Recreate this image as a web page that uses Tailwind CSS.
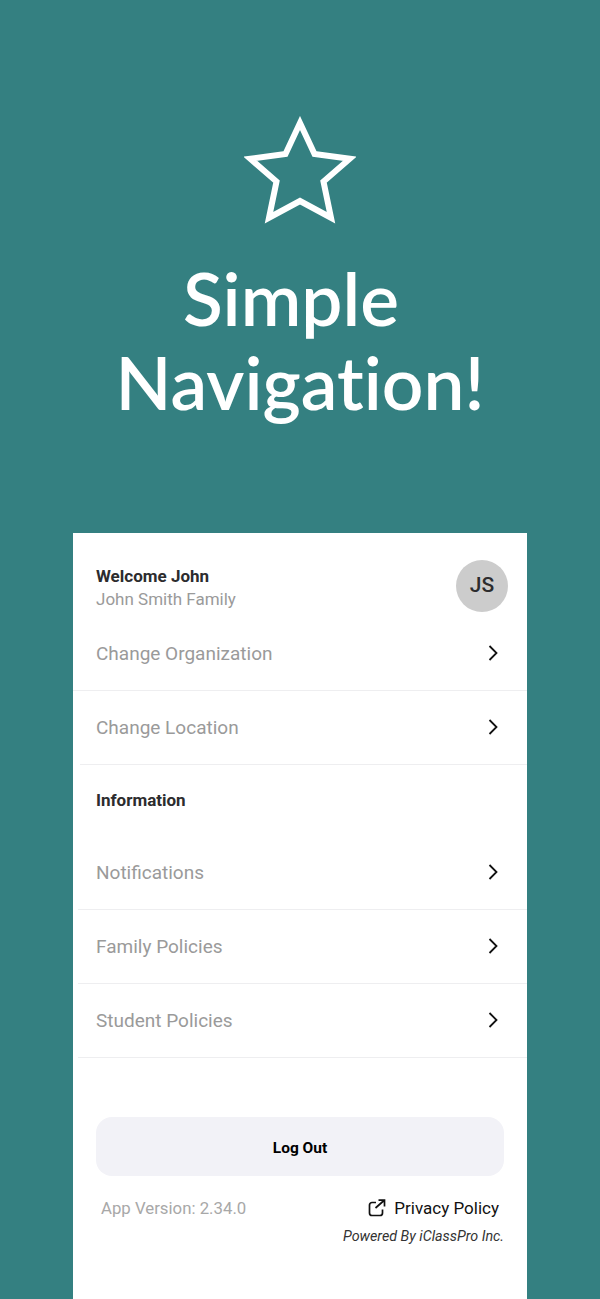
<!DOCTYPE html>
<html lang="en">
  <head>
    <meta charset="UTF-8" />
    <title>Simple Navigation</title>
    <script src="https://cdn.jsdelivr.net/npm/@tailwindcss/browser@4"></script>
  </head>
  <body class="bg-[#348081] font-['Roboto',sans-serif]">
    <div class="h-[1299px] overflow-hidden flex flex-col items-center">
      <!-- Hero -->
      <svg class="mt-[116px] block" width="112" height="108" viewBox="0 0 112 108">
        <polygon points="56,7 70.500,38 105.800,42.700 79.500,65.500 87,101.700 56,85 25,101.700 32.500,65.500 6.200,42.700 41.500,38" fill="none" stroke="#fff" stroke-width="6" stroke-miterlimit="10" />
      </svg>
      <h1 class="mt-[32px] text-center text-white font-['Lato',sans-serif] font-semibold text-[73px] leading-[84px] [font-variant-ligatures:none]">
        <span class="block pr-[18px]">Simple</span>
        <span class="block">Navigation!</span>
      </h1>

      <!-- Menu card -->
      <main class="mt-[109px] w-[454px] flex-1 bg-white">
        <div class="flex items-start justify-between pt-[27px] pl-[23px] pr-[19px] h-[80px]">
          <div>
            <p class="text-[17px] leading-[22px] mt-[5px] font-bold text-[#2c2c2e]">Welcome John</p>
            <p class="text-[17px] leading-[24px] text-[#9a9a9a]">John Smith Family</p>
          </div>
          <div class="w-[52px] h-[52px] rounded-full bg-[#cccccc] flex items-center justify-center text-[21px] font-medium text-[#2c2c2e]">JS</div>
        </div>

        <a class="flex items-center justify-between h-[78px] pl-[23px] pr-[27px] pt-[6px] text-[19px] text-[#9a9a9a] border-b border-[#eeeef0]">
          Change Organization
          <svg class="w-[14px] h-[20px] mb-[4px]" viewBox="0 0 14 20"><path d="M3.500 3 L10.500 10 L3.500 17" fill="none" stroke="#111" stroke-width="1.800" /></svg>
        </a>
        <div class="pl-[7px]">
          <a class="flex items-center justify-between h-[74px] pl-[16px] pr-[27px] pt-[2px] text-[19px] text-[#9a9a9a] border-b border-[#eeeef0]">
            Change Location
            <svg class="w-[14px] h-[20px] mb-[4px]" viewBox="0 0 14 20"><path d="M3.500 3 L10.500 10 L3.500 17" fill="none" stroke="#111" stroke-width="1.800" /></svg>
          </a>
        </div>

        <p class="pl-[23px] pt-[24px] h-[71px] text-[17px] leading-[22px] font-bold text-[#2c2c2e]">Information</p>

        <div class="pl-[5px]">
          <a class="flex items-center justify-between h-[74px] pl-[18px] pr-[27px] pt-[2px] text-[19px] text-[#9a9a9a] border-b border-[#eeeef0]">
            Notifications
            <svg class="w-[14px] h-[20px] mb-[4px]" viewBox="0 0 14 20"><path d="M3.500 3 L10.500 10 L3.500 17" fill="none" stroke="#111" stroke-width="1.800" /></svg>
          </a>
          <a class="flex items-center justify-between h-[74px] pl-[18px] pr-[27px] pt-[2px] text-[19px] text-[#9a9a9a] border-b border-[#eeeef0]">
            Family Policies
            <svg class="w-[14px] h-[20px] mb-[4px]" viewBox="0 0 14 20"><path d="M3.500 3 L10.500 10 L3.500 17" fill="none" stroke="#111" stroke-width="1.800" /></svg>
          </a>
          <a class="flex items-center justify-between h-[74px] pl-[18px] pr-[27px] pt-[2px] text-[19px] text-[#9a9a9a] border-b border-[#eeeef0]">
            Student Policies
            <svg class="w-[14px] h-[20px] mb-[4px]" viewBox="0 0 14 20"><path d="M3.500 3 L10.500 10 L3.500 17" fill="none" stroke="#111" stroke-width="1.800" /></svg>
          </a>
        </div>

        <!-- Footer -->
        <div class="px-[23px] pt-[59px]">
          <button class="w-full h-[59px] pt-[5px] rounded-[16px] bg-[#f2f2f7] text-[15.500px] font-bold text-black">Log Out</button>
          <div class="flex items-center justify-between mt-[20px] pl-[5px] pr-[5px]">
            <span class="text-[16.800px] leading-[24px] text-[#a8a8a8]">App Version: 2.34.0</span>
            <span class="flex items-center gap-[8px] text-[17px] leading-[24px] text-[#111]">
              <svg width="18" height="18" viewBox="0 0 18 18" fill="none" stroke="#111" stroke-width="1.700">
                <path d="M8 3.500H4A2.500 2.500 0 0 0 1.500 6V14A2.500 2.500 0 0 0 4 16.500H12A2.500 2.500 0 0 0 14.500 14V10.500" />
                <path d="M7.500 9L16 1.500M10.500 1.200H16.500V7.500" />
              </svg>
              Privacy Policy
            </span>
          </div>
          <p class="mt-[6px] text-right text-[14.300px] leading-[20px] italic text-[#333333]">Powered By iClassPro Inc.</p>
        </div>
      </main>
    </div>
  </body>
</html>
